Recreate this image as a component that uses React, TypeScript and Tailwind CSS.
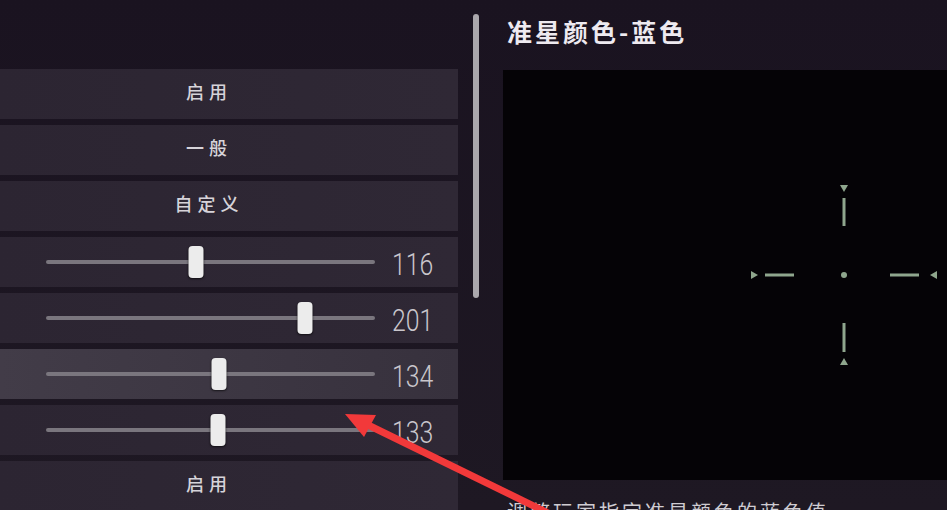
const rows: { kind: "text" | "slider"; label?: string; value?: number; active?: boolean }[] = [
  { kind: "text", label: "启用" },
  { kind: "text", label: "一般" },
  { kind: "text", label: "自定义" },
  { kind: "slider", value: 116 },
  { kind: "slider", value: 201 },
  { kind: "slider", value: 134, active: true },
  { kind: "slider", value: 133 },
  { kind: "text", label: "启用" },
];

function Slider({ value }: { value: number }) {
  return (
    <div className="flex items-center h-full">
      <div className="relative ml-[46px] w-[329px] h-[4px] bg-[#7a767e] rounded-full">
        <div
          className="absolute top-1/2 -translate-x-1/2 -translate-y-1/2 w-[15px] h-[32px] rounded-[4px] bg-[#ececec] shadow-[0_1px_2px_rgba(0,0,0,0.6)]"
          style={{ left: `${(value / 255) * 100}%` }}
        />
      </div>
      <span className="ml-[17px] mt-[4px] text-[31px] leading-none text-[#c9c6cc] font-light origin-left scale-x-[0.8] font-['Roboto',sans-serif]">
        {value}
      </span>
    </div>
  );
}

function Crosshair() {
  const c = "#8fa68d";
  return (
    <svg width="200" height="200" viewBox="0 0 200 200" className="absolute left-[241px] top-[105px]">
      <polygon points="96,10 104,10 100,17" fill={c} />
      <rect x="98.5" y="23" width="3" height="28" fill={c} />
      <rect x="98.5" y="148" width="3" height="29" fill={c} />
      <polygon points="96,190 104,190 100,183" fill={c} />
      <polygon points="7,96 7,104 14,100" fill={c} />
      <rect x="21" y="98.5" width="29" height="3" fill={c} />
      <rect x="146" y="98.5" width="29" height="3" fill={c} />
      <polygon points="193,96 193,104 186,100" fill={c} />
      <circle cx="100" cy="100" r="3" fill={c} />
    </svg>
  );
}

export default function App() {
  return (
    <div className="relative w-[947px] h-[510px] overflow-hidden bg-gradient-to-b from-[#1a1320] to-[#1e1823] flex font-['Noto_Sans_CJK_SC',sans-serif]">
      {/* left settings list */}
      <div className="w-[458px] shrink-0 pt-[69px] flex flex-col gap-[6px]">
        {rows.map((r, i) => (
          <div
            key={i}
            className={
              "h-[50px] shrink-0 " +
              (r.active
                ? "bg-gradient-to-r from-[#423c48] to-[#37313d]"
                : "bg-gradient-to-r from-[#2c2532] to-[#2f2835]")
            }
          >
            {r.kind === "text" ? (
              <div className="h-full flex items-center justify-center pr-[40px] pb-[5px] text-[18px] font-medium tracking-[5px] text-[#d6d3d9]">
                {r.label}
              </div>
            ) : (
              <Slider value={r.value!} />
            )}
          </div>
        ))}
      </div>

      {/* scrollbar */}
      <div className="ml-[15px] pt-[14px] shrink-0">
        <div className="w-[6px] h-[284px] rounded-full bg-[#aaa7ac]" />
      </div>

      {/* right preview panel */}
      <div className="ml-[24px] flex-1 flex flex-col">
        <div className="h-[70px] shrink-0 pt-[13px] pl-[4px] text-[25px] font-bold tracking-[3px] text-[#eeeaf0] leading-[36px]">
          准星颜色-蓝色
        </div>
        <div className="relative h-[410px] shrink-0 bg-[#050306]">
          <Crosshair />
        </div>
        <div className="shrink-0 pt-[18px] pl-[4px] text-[20px] tracking-[3px] text-[#cfccd2] leading-[28px] whitespace-nowrap">
          调整玩家指定准星颜色的蓝色值
        </div>
      </div>

      {/* red annotation arrow */}
      <svg width="947" height="510" className="absolute left-0 top-0 pointer-events-none">
        <line x1="552" y1="515" x2="366" y2="424" stroke="#f2393a" strokeWidth="7" />
        <polygon points="345,414 376,415 364,437" fill="#f2393a" />
      </svg>
    </div>
  );
}
